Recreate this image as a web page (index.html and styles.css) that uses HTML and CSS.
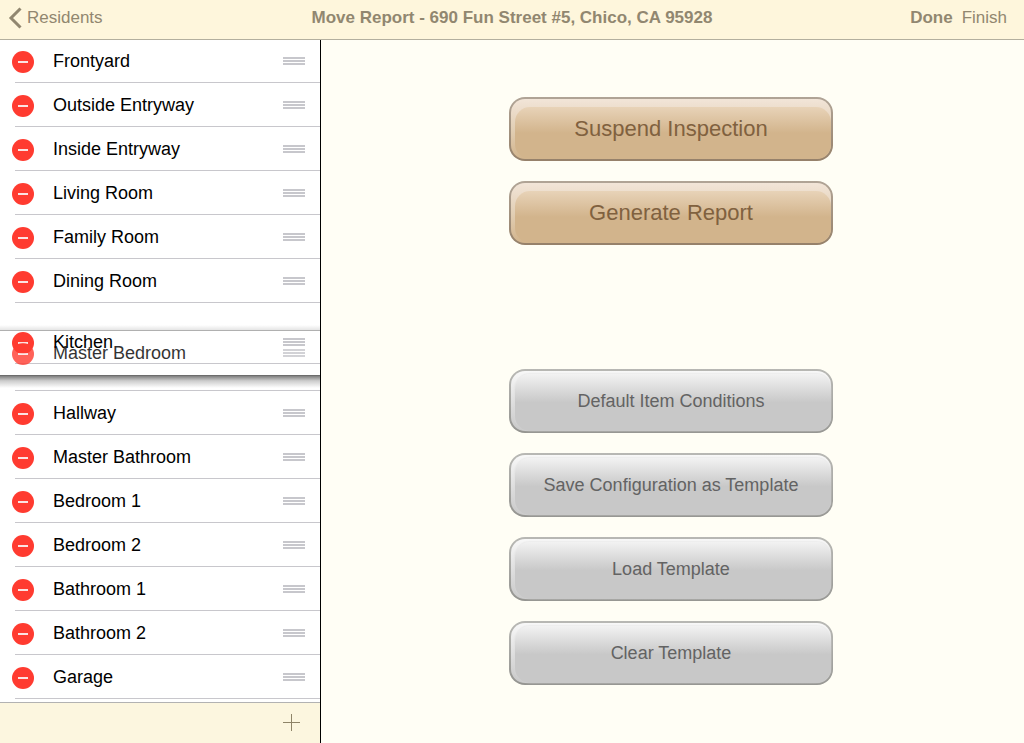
FILE: index.html
```html
<!DOCTYPE html>
<html lang="en">
<head>
  <meta charset="UTF-8">
  <meta name="viewport" content="width=device-width, initial-scale=1">
  <title>Move Report</title>
  <link rel="stylesheet" href="styles.css">
</head>
<body>
  <header class="navbar">
    <a class="back" href="#residents">
      <svg width="14" height="22" viewBox="0 0 14 22" fill="none" stroke="currentColor" stroke-width="3"><path d="M12.5 1.5 L3 11 L12.5 20.5"/></svg>
      Residents
    </a>
    <h1 class="title">Move Report - 690 Fun Street #5, Chico, CA 95928</h1>
    <div class="nav-actions">
      <button class="done" type="button">Done</button>
      <button type="button">Finish</button>
    </div>
  </header>

  <div class="split">
    <aside class="sidebar">
      <ul class="rooms">
        <li class="room"><button class="delete" type="button" aria-label="Delete Frontyard"></button><span class="name">Frontyard</span><span class="handle"></span></li>
        <li class="room"><button class="delete" type="button" aria-label="Delete Outside Entryway"></button><span class="name">Outside Entryway</span><span class="handle"></span></li>
        <li class="room"><button class="delete" type="button" aria-label="Delete Inside Entryway"></button><span class="name">Inside Entryway</span><span class="handle"></span></li>
        <li class="room"><button class="delete" type="button" aria-label="Delete Living Room"></button><span class="name">Living Room</span><span class="handle"></span></li>
        <li class="room"><button class="delete" type="button" aria-label="Delete Family Room"></button><span class="name">Family Room</span><span class="handle"></span></li>
        <li class="room"><button class="delete" type="button" aria-label="Delete Dining Room"></button><span class="name">Dining Room</span><span class="handle"></span></li>
        <!-- two rows swapping places while one is dragged -->
        <li class="swap">
          <div class="room sliding"><button class="delete" type="button" aria-label="Delete Kitchen"></button><span class="name">Kitchen</span><span class="handle"></span></div>
          <div class="room dragging"><button class="delete" type="button" aria-label="Delete Master Bedroom"></button><span class="name">Master Bedroom</span><span class="handle"></span></div>
        </li>
        <li class="room"><button class="delete" type="button" aria-label="Delete Hallway"></button><span class="name">Hallway</span><span class="handle"></span></li>
        <li class="room"><button class="delete" type="button" aria-label="Delete Master Bathroom"></button><span class="name">Master Bathroom</span><span class="handle"></span></li>
        <li class="room"><button class="delete" type="button" aria-label="Delete Bedroom 1"></button><span class="name">Bedroom 1</span><span class="handle"></span></li>
        <li class="room"><button class="delete" type="button" aria-label="Delete Bedroom 2"></button><span class="name">Bedroom 2</span><span class="handle"></span></li>
        <li class="room"><button class="delete" type="button" aria-label="Delete Bathroom 1"></button><span class="name">Bathroom 1</span><span class="handle"></span></li>
        <li class="room"><button class="delete" type="button" aria-label="Delete Bathroom 2"></button><span class="name">Bathroom 2</span><span class="handle"></span></li>
        <li class="room"><button class="delete" type="button" aria-label="Delete Garage"></button><span class="name">Garage</span><span class="handle"></span></li>
      </ul>
      <div class="toolbar">
        <button class="add" type="button" aria-label="Add room">
          <svg width="17" height="17" viewBox="0 0 17 17" stroke="currentColor"><path d="M0 8.5H17M8.5 0V17"/></svg>
        </button>
      </div>
    </aside>

    <main class="actions">
      <div class="group">
        <button class="glossy tan" type="button">Suspend Inspection</button>
        <button class="glossy tan" type="button">Generate Report</button>
      </div>
      <div class="group">
        <button class="glossy" type="button">Default Item Conditions</button>
        <button class="glossy" type="button">Save Configuration as Template</button>
        <button class="glossy" type="button">Load Template</button>
        <button class="glossy" type="button">Clear Template</button>
      </div>
    </main>
  </div>
</body>
</html>
```
FILE: styles.css
```css
* {
  box-sizing: border-box;
}

body {
  margin: 0;
  height: 100vh;
  display: flex;
  flex-direction: column;
  font-family: "Liberation Sans", Arial, sans-serif;
  font-size: 18px;
  color: #000;
  background: #fffef5;
}

button {
  font: inherit;
  color: inherit;
  background: none;
  border: none;
  padding: 0;
  cursor: pointer;
}

svg {
  display: block;
}

.navbar {
  position: relative;
  z-index: 2;
  display: grid;
  grid-template-columns: 1fr auto 1fr;
  align-items: center;
  height: 39px;
  padding: 0 17px 4px;
  font-size: 17px;
  color: #918770;
  background: #fef6dc;
  box-shadow: 0 1px 0 #b3af9e;
}

.back {
  display: flex;
  align-items: center;
  gap: 5px;
  margin-left: -9px;
  color: inherit;
  text-decoration: none;
}

.title {
  margin: 0;
  font-size: 17px;
  font-weight: bold;
}

.nav-actions {
  display: flex;
  justify-content: flex-end;
  gap: 9px;
}

.done {
  font-weight: bold;
}

.split {
  flex: 1;
  display: flex;
  min-height: 0;
}

.sidebar {
  display: flex;
  flex-direction: column;
  width: 321px;
  background: #fff;
  border-right: 1px solid #000;
}

.rooms {
  flex: 1;
  min-height: 0;
  margin: 0;
  padding: 0;
  overflow: hidden;
  list-style: none;
}

.room {
  display: flex;
  align-items: center;
  height: 44px;
  padding: 0 15px 0 12px;
  background: linear-gradient(#c8c7cc, #c8c7cc) 15px 100% / 100% 1px no-repeat;
}

.name {
  flex: 1;
  margin-left: 19px;
}

.delete {
  display: flex;
  align-items: center;
  justify-content: center;
  width: 22px;
  height: 22px;
  margin-top: 2px;
  border-radius: 50%;
  background: #ff3b30;
}

.delete::before {
  content: "";
  width: 10px;
  height: 2px;
  background: #fbe3e1;
}

.handle {
  width: 22px;
  height: 8px;
  background: repeating-linear-gradient(#c7c7cc 0 2px, transparent 2px 3px);
}

.swap {
  position: relative;
  height: 88px;
  background: linear-gradient(#c8c7cc, #c8c7cc) 15px 100% / 100% 1px no-repeat;
}

.sliding,
.dragging {
  position: absolute;
  left: 0;
  right: 0;
}

.sliding {
  top: 17px;
}

.dragging {
  top: 28px;
  background: none;
}

.dragging > * {
  opacity: 0.8;
}

/* shadows above and below the lifted row */
.dragging::before,
.dragging::after {
  content: "";
  position: absolute;
  left: 0;
  right: 0;
}

.dragging::before {
  bottom: 100%;
  height: 5px;
  border-bottom: 1px solid #b0b0b0;
  background: linear-gradient(transparent, rgba(0, 0, 0, 0.1));
}

.dragging::after {
  top: 100%;
  height: 12px;
  border-top: 1px solid #6c6c6c;
  background: linear-gradient(rgba(0, 0, 0, 0.5), rgba(0, 0, 0, 0.2) 40%, transparent);
}

.toolbar {
  display: flex;
  align-items: center;
  justify-content: flex-end;
  height: 41px;
  padding: 0 20px 2px 0;
  color: #8e8468;
  background: #fcf6df;
  border-top: 1px solid #b2b2b2;
}

.actions {
  flex: 1;
  display: flex;
  flex-direction: column;
  align-items: center;
  gap: 124px;
  padding: 58px 3px 0 0;
}

.group {
  display: flex;
  flex-direction: column;
  gap: 20px;
  width: 324px;
}

/* rim gradient on the border, bevel on the padding box, face drawn by ::before */
.glossy {
  position: relative;
  z-index: 0;
  height: 64px;
  border: 2px solid transparent;
  border-radius: 16px;
  color: #636363;
  background:
    linear-gradient(#f8f8f8, #e0e0e0 50%, #c8c8c8) padding-box,
    linear-gradient(#b8b8b4, #949490) border-box;
}

.glossy::before {
  content: "";
  position: absolute;
  z-index: -1;
  inset: 3px 0 0 4px;
  border-radius: 15px;
  background: linear-gradient(#f2f2f2, #c8c8c8 50%);
  box-shadow: 0 0 2px #d8d8d8;
}

.tan {
  font-size: 22px;
  color: #80613f;
  background:
    linear-gradient(#f2e5d8, #e2cfb5 50%, #d2b48c) padding-box,
    linear-gradient(#b0a496, #96816a) border-box;
}

.tan::before {
  inset: 8px 0 0 4px;
  background: linear-gradient(#e8d3b8, #d2b48c 50%);
  box-shadow: none;
}
```
